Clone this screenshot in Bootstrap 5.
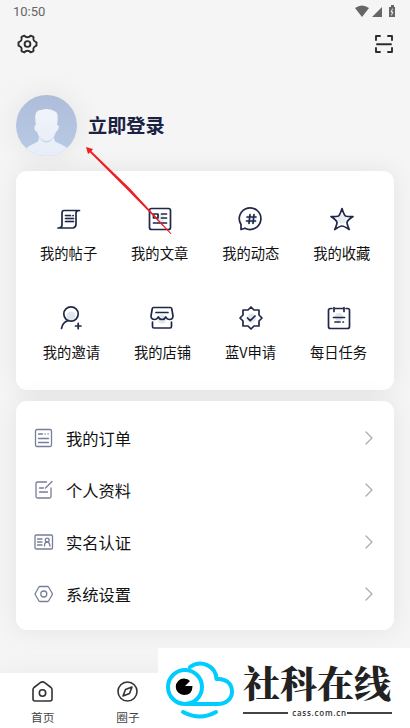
<!DOCTYPE html>
<html lang="zh-CN">
<head>
<meta charset="utf-8">
<meta name="viewport" content="width=device-width, initial-scale=1">
<title>我的</title>
<link href="https://cdn.jsdelivr.net/npm/bootstrap@5.3.0/dist/css/bootstrap.min.css" rel="stylesheet">
<style>
body{background:#f5f5f5;font-family:"Noto Sans CJK SC",sans-serif;color:#111;width:410px;height:728px;overflow:hidden}
svg{display:block;fill:none;stroke-linecap:round;stroke-linejoin:round;flex:none;overflow:visible}
.status{height:24px;padding:0 13px;font:13px/24px Roboto,sans-serif;color:#666}
.tools{height:40px;padding:0 17px 0 17px}
.profile{height:107px;padding:31px 16px 0}
.avatar{width:61px;height:61px;border-radius:50%;box-shadow:0 0 28px 4px #0000000e}
.login{font-size:19.2px;font-weight:700;color:#1a2142;line-height:61px;margin-left:11px}
.panel{margin:0 16px;background:#fff;border-radius:11px;box-shadow:0 0 26px rgba(0,0,0,.075);position:relative}
.shortcuts{height:219px;padding-top:36px}
.tile{font-size:14.3px;line-height:20px;height:99px;white-space:nowrap}
.tile svg{margin-bottom:12px;stroke:#1f2849;stroke-width:1.7}
.tiles{gap:33.9px}
.menu{height:229px;margin-top:11px;padding-top:11px}
.entry{height:52px;font-size:16.3px;padding:0 21px 0 17px}
.entry svg:first-child{margin-right:12px;stroke:#777e98;stroke-width:1.3}
.tabs{height:55px;margin-top:43px;background:#fff;font-size:11.7px;line-height:16px;color:#444;box-shadow:0 0 28px #0000000c}
.tab{width:85.3px;padding-top:8px}
.tab svg{stroke:#333;stroke-width:1.6;margin-bottom:7px}
.arrow{position:absolute;left:80px;top:140px}
.brand{position:absolute;left:158px;top:648px;width:252px;height:80px;background:#fff;padding:12px 0 0 7px}
.brand-name{font:900 37px/46px "Noto Serif CJK SC","Noto Sans CJK SC",serif;color:#222;white-space:nowrap;height:46px;margin-top:-1px}
.domain{font:600 8px/10px "Open Sans",sans-serif;letter-spacing:.75px;color:#333;width:149px;margin-top:3px}
.rule{height:2px;background:#444}
</style>
<script src="https://cdn.jsdelivr.net/npm/bootstrap@5.3.0/dist/js/bootstrap.bundle.min.js"></script>
</head>
<body>
<header>
  <div class="status d-flex justify-content-between align-items-center">
    <span>10:50</span>
    <svg width="42" height="14" viewBox="0 0 42 14" fill="#666"><path fill="#666" d="M0 3Q7-2 14 3L7 12zM17 12L27 2v10zM34 2h2V0h3v2h1v10h-6z"/><path stroke="#f5f5f5" stroke-width="1" d="M37.500 4L36 7h2l-1.500 3"/></svg>
  </div>
  <div class="tools d-flex justify-content-between align-items-center">
    <svg width="21" height="20" viewBox="0 0 21 20" stroke="#2d2d2d" stroke-width="1.900"><path d="M5.500 2.300L7.400 1.600Q8.500 3.200 10.500 3.200T13.600 1.600L15.500 2.300 16.600 3.300Q16 5.500 16.800 6.500T19.500 8.300V11.700Q17.600 12.500 16.800 13.500T16.600 16.700L15.500 17.700 13.600 18.400Q12.500 16.800 10.500 16.800T7.400 18.400L5.500 17.700 4.400 16.700Q5 14.500 4.200 13.500T1.500 11.700V8.300Q3.400 7.500 4.200 6.500T4.400 3.300z"/><circle cx="10.500" cy="10" r="2.900"/></svg>
    <svg width="18" height="18" viewBox="0 0 18 18" stroke="#2d2d2d" stroke-width="1.900"><path d="M1 5V1h4M13 1h4v4M1 13v4h4M13 17h4v-4M2 9.200h14"/></svg>
  </div>
</header>
<section class="profile d-flex">
  <div class="avatar"><svg width="61" height="61" viewBox="0 0 61 61"><defs><clipPath id="face"><circle cx="30.500" cy="30.500" r="30.500"/></clipPath><linearGradient id="sky" x2="0" y2="1"><stop stop-color="#aebeda"/><stop offset="1" stop-color="#b9cae5"/></linearGradient><linearGradient id="skin" x2="0" y2="1"><stop stop-color="#f0f4fa"/><stop offset="1" stop-color="#e9eef8"/></linearGradient></defs><g clip-path="url(#face)"><path fill="url(#sky)" d="M0 0h61v61H0z"/><path fill="#e9eff8" d="M8 55Q14 50 21 47Q23 46 23 41h15q0 5 2 6 9 4 14 8v6H8z"/><path fill="#c6d2e6" d="M22 39q3 8.500 8.500 8.500t8.500-8.500z"/><path fill="url(#skin)" d="M20 30Q17 15 25 15Q33 12 40 17q3 2 1 13 3 0 1 5l-2 2q-3 9-9.500 9T21 37q-4-2-2-7z"/></g></svg></div>
  <div class="login">立即登录</div>
</section>
<main>
  <section class="panel shortcuts">
    <div class="tiles d-flex" style="padding-left:24px">
      <div class="tile d-flex flex-column align-items-center"><svg width="24" height="24" viewBox="0 0 24 24"><path fill="#e7edf2" stroke="none" d="M9 9h8v7H9z"/><path d="M22.500 3.500H7Q5 3.500 5 6v12q0 3-4 3h15q3-.5 3-4V6q0-2.500 3.500-2.500M8.500 8.500h5M16 8.500h.2M8.500 11.500h8M8.500 14.500h8"/></svg>我的帖子</div>
      <div class="tile d-flex flex-column align-items-center"><svg width="24" height="24" viewBox="0 0 24 24"><path fill="#e7edf2" stroke="none" d="M9 8h7v9H9z"/><rect x="1.500" y="1.500" width="21" height="21" rx="2"/><path d="M5.500 7h4.500v4H5.500zM13.500 7h5M13.500 11h5M5.500 16h13"/></svg>我的文章</div>
      <div class="tile d-flex flex-column align-items-center"><svg width="24" height="24" viewBox="0 0 24 24"><path fill="#e7edf2" stroke="none" d="M8 8h9v8H8z"/><path d="M2 22.500v-5A10.800 10.800 0 1 1 6 21.200L2 22.500M8 10h9M7.500 14h9M11 7.500L10 16.500M15 7.500l-1 9"/></svg>我的动态</div>
      <div class="tile d-flex flex-column align-items-center"><svg width="24" height="24" viewBox="0 0 24 24"><circle cx="12" cy="12" r="4.500" fill="#e7edf2" stroke="none"/><path d="M12 1.500q2 6.500 3.500 7.500 2 .7 7.500.5-6 4-6 6 0 2 2.300 7Q14 19 12 19t-7.300 3.500Q7 17.500 7 15.500q0-2-6-6 5.500.2 7.500-.5Q10 8 12 1.500z"/></svg>我的收藏</div>
    </div>
    <div class="tiles d-flex justify-content-center">
      <div class="tile d-flex flex-column align-items-center"><svg width="24" height="24" viewBox="0 0 24 24"><circle cx="12" cy="10" r="4.500" fill="#e1e7ec" stroke="none"/><circle cx="12" cy="8" r="7.200"/><path d="M9 14.500Q3.500 16.500 2.500 22.500M16.500 20h5.500M19.200 17.300v5.400"/></svg>我的邀请</div>
      <div class="tile d-flex flex-column align-items-center"><svg width="24" height="24" viewBox="0 0 24 24"><circle cx="12" cy="13" r="4.500" fill="#e1e7ec" stroke="none"/><path d="M3.500 1.500h17q1 0 1.300 1.500L23 10q-.2 3.500-3.500 3.500-2.500 0-3.700-2.500-1.300 2.500-3.800 2.500T8.200 11Q7 13.500 4.500 13.500 1.200 13.500 1 10L2.200 3Q2.500 1.500 3.500 1.500zM6 6.500h12M2.500 16v4.500q0 1.500 1.500 1.500h16q1.500 0 1.500-1.500V16"/></svg>我的店铺</div>
      <div class="tile d-flex flex-column align-items-center"><svg width="24" height="24" viewBox="0 0 24 24"><circle cx="12.500" cy="12" r="4.500" fill="#e1e7ec" stroke="none"/><path d="M12 1l3 3h5v5l3 3-3 3v5h-5l-3 3-3-3H4v-5l-3-3 3-3V4h5zM8.500 12l2.700 2.700L16 10"/></svg>蓝V申请</div>
      <div class="tile d-flex flex-column align-items-center"><svg width="24" height="24" viewBox="0 0 24 24"><circle cx="12" cy="11" r="4" fill="#e1e7ec" stroke="none"/><path d="M5 2.500H3.500Q1.500 2.500 1.500 4.500v16q0 2 2 2h17q2 0 2-2v-16q0-2-2-2H19M7 2.500h10M7 1.500v4M17 1.500v4M6.500 11.500h11M8 16h5M16 16h.4"/></svg>每日任务</div>
    </div>
  </section>
  <section class="panel menu">
    <div class="entry d-flex align-items-center"><svg width="21" height="20" viewBox="0 0 21 20"><rect x="2.500" y="1.500" width="16" height="17" rx="1.500"/><path d="M5.500 6h4M12 6h.2M15 6h.2M5.500 10.500h10M5.500 14.500h10"/></svg><span>我的订单</span><svg class="ms-auto" width="8" height="14" viewBox="0 0 8 14" stroke="#aaa" stroke-width="1.200"><path d="M1 1l6 6-6 6"/></svg></div>
    <div class="entry d-flex align-items-center"><svg width="21" height="20" viewBox="0 0 21 20"><path d="M13.500 2H4.500Q3 2 3 3.500v13Q3 18 4.500 18h12q1.500 0 1.500-1.500V8M19 1.500L12.500 8M6.500 8h4M6.500 12h8"/></svg><span>个人资料</span><svg class="ms-auto" width="8" height="14" viewBox="0 0 8 14" stroke="#aaa" stroke-width="1.200"><path d="M1 1l6 6-6 6"/></svg></div>
    <div class="entry d-flex align-items-center"><svg width="21" height="20" viewBox="0 0 21 20"><rect x="2" y="3" width="17.500" height="14" rx="1.200"/><path d="M4.500 7h4.500M4.500 10h4.500M4.500 13h4.500M11.500 14q0-4 2.500-4t3 4"/><circle cx="14.200" cy="8" r="1.900"/></svg><span>实名认证</span><svg class="ms-auto" width="8" height="14" viewBox="0 0 8 14" stroke="#aaa" stroke-width="1.200"><path d="M1 1l6 6-6 6"/></svg></div>
    <div class="entry d-flex align-items-center"><svg width="21" height="20" viewBox="0 0 21 20"><path d="M7 2.500h7.500q.8 0 1.200.7L19.300 9.500q.3.500 0 1l-3.600 6.300q-.4.700-1.200.7H7q-.8 0-1.200-.7L2.200 10.500q-.3-.5 0-1l3.600-6.300q.4-.7 1.200-.7z"/><circle cx="10.800" cy="10" r="3"/></svg><span>系统设置</span><svg class="ms-auto" width="8" height="14" viewBox="0 0 8 14" stroke="#aaa" stroke-width="1.200"><path d="M1 1l6 6-6 6"/></svg></div>
  </section>
</main>
<nav class="tabs d-flex">
  <div class="tab d-flex flex-column align-items-center"><svg width="21" height="21" viewBox="0 0 21 21"><path d="M1 8.500Q1 7.500 2 6.500L8 1.800Q10.500 0 13 1.800L19 6.500q1 1 1 2V18q0 2-2 2H3q-2 0-2-2z"/><circle cx="10.500" cy="12" r="3.200"/></svg>首页</div>
  <div class="tab d-flex flex-column align-items-center"><svg width="21" height="21" viewBox="0 0 21 21"><circle cx="10.500" cy="10.500" r="9.500"/><path d="M15 6l-2.500 6.500L6 15l2.500-6.500z"/></svg>圈子</div>
</nav>
<svg class="arrow" width="95" height="98" viewBox="0 0 95 98"><path fill="#ed2024" d="M6 7l7 2-1.500 2.200L50 48.500 91.300 93.500 90.700 94 48.500 51 10 12.500 8 14z"/><path stroke="#ed2024" stroke-width=".7" d="M50 50L91 93.800"/></svg>
<aside class="brand d-flex">
  <svg width="70" height="60" viewBox="0 0 70 60" stroke="#0cf" stroke-width="4"><circle cx="20" cy="27" r="17"/><path d="M25 7C36-1 51 6 51.500 19 61 18 67 24 67 31.500S61 44 53 44H20M18 52q17 9 33 0"/><path fill="#000" stroke="none" d="M19 18.500q4 0 6 2.500l-5 5h7.500q0 9-8.500 9a8.250 8.250 0 0 1 0-16.500"/></svg>
  <div class="ms-2"><div class="brand-name">社科在线</div><div class="domain d-flex align-items-center"><span class="rule flex-fill me-1"></span>cass.com.cn<span class="rule flex-fill"></span></div></div>
</aside>
</body>
</html>
